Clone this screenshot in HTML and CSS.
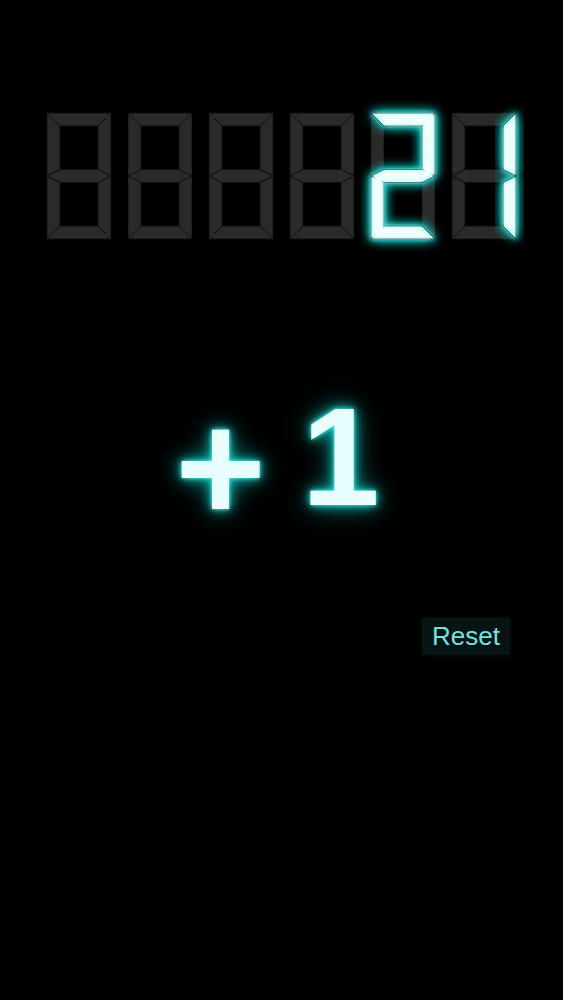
FILE: index.html
```html
<!DOCTYPE html>
<html>
<head>
<meta charset="utf-8">
<link rel="stylesheet" href="styles.css">
</head>
<body>
<svg width="0" height="0" class="defs">
  <defs>
    <filter id="glow" x="-60%" y="-60%" width="220%" height="220%">
      <feGaussianBlur in="SourceAlpha" stdDeviation="6" result="b1"/>
      <feFlood flood-color="#0fc8c0" result="c1"/>
      <feComposite in="c1" in2="b1" operator="in" result="g1"/>
      <feGaussianBlur in="SourceAlpha" stdDeviation="2.2" result="b2"/>
      <feFlood flood-color="#38eee6" result="c2"/>
      <feComposite in="c2" in2="b2" operator="in" result="g2"/>
      <feMorphology in="SourceAlpha" operator="erode" radius="2" result="er"/>
      <feGaussianBlur in="er" stdDeviation="1.5" result="b3"/>
      <feFlood flood-color="#f0fffe" result="c3"/>
      <feComposite in="c3" in2="b3" operator="in" result="g3"/>
      <feMerge>
        <feMergeNode in="g1"/>
        <feMergeNode in="g1"/>
        <feMergeNode in="g2"/>
        <feMergeNode in="SourceGraphic"/>
        <feMergeNode in="g3"/>
      </feMerge>
    </filter>
    <g id="sa"><polygon points="0,0 64,0 51,13 13,13"/></g>
    <g id="sb"><polygon points="64,0 64,63 51,56.5 51,13"/></g>
    <g id="sc"><polygon points="64,63 64,126 51,113 51,69.5"/></g>
    <g id="sd"><polygon points="0,126 64,126 51,113 13,113"/></g>
    <g id="se"><polygon points="0,63 13,69.5 13,113 0,126"/></g>
    <g id="sf"><polygon points="0,0 13,13 13,56.5 0,63"/></g>
    <g id="sg"><polygon points="0,63 13,56.5 51,56.5 64,63 51,69.5 13,69.5"/></g>
  </defs>
</svg>
<main class="screen">
  <div class="display">
    <svg class="digit" viewBox="0 0 64 126"><g class="off"><use href="#sa"/><use href="#sb"/><use href="#sc"/><use href="#sd"/><use href="#se"/><use href="#sf"/><use href="#sg"/></g></svg>
    <svg class="digit" viewBox="0 0 64 126"><g class="off"><use href="#sa"/><use href="#sb"/><use href="#sc"/><use href="#sd"/><use href="#se"/><use href="#sf"/><use href="#sg"/></g></svg>
    <svg class="digit" viewBox="0 0 64 126"><g class="off"><use href="#sa"/><use href="#sb"/><use href="#sc"/><use href="#sd"/><use href="#se"/><use href="#sf"/><use href="#sg"/></g></svg>
    <svg class="digit" viewBox="0 0 64 126"><g class="off"><use href="#sa"/><use href="#sb"/><use href="#sc"/><use href="#sd"/><use href="#se"/><use href="#sf"/><use href="#sg"/></g></svg>
    <svg class="digit" viewBox="0 0 64 126"><g class="off"><use href="#sc"/><use href="#sf"/></g><g class="on" filter="url(#glow)"><use href="#sa"/><use href="#sb"/><use href="#sg"/><use href="#se"/><use href="#sd"/></g></svg>
    <svg class="digit" viewBox="0 0 64 126"><g class="off"><use href="#sa"/><use href="#sd"/><use href="#se"/><use href="#sf"/><use href="#sg"/></g><g class="on" filter="url(#glow)"><use href="#sb"/><use href="#sc"/></g></svg>
  </div>
  <div class="increment"><span class="plus">+</span><span class="one">1</span></div>
  <div class="actions"><button class="reset">Reset</button></div>
</main>
</body>
</html>
```
FILE: styles.css
```css
html, body {
  margin: 0;
  padding: 0;
  background: #000;
  height: 100%;
}
.defs {
  position: absolute;
  width: 0;
  height: 0;
}
.screen {
  width: 563px;
  height: 1000px;
  background: #000;
  display: flex;
  flex-direction: column;
  font-family: "Liberation Sans", Arial, sans-serif;
}
.display {
  display: flex;
  gap: 17px;
  padding: 113px 0 0 47px;
}
.digit {
  width: 64px;
  height: 126px;
  overflow: visible;
  flex: none;
}
.off {
  fill: #2a2a2a;
  stroke: #0c0c0c;
  stroke-width: 0.8;
  stroke-linejoin: miter;
}
.on {
  fill: #b8fbf6;
  stroke: #000;
  stroke-width: 0.8;
}
.increment {
  margin-top: 148px;
  display: flex;
  justify-content: center;
  align-items: flex-end;
  gap: 36px;
  font-weight: bold;
  font-size: 140px;
  line-height: 140px;
  color: #e8fffd;
  text-shadow: 0 0 4px #50f5ee, 0 0 12px #14d4cc, 0 0 26px #0a9a94;
  padding-right: 8px;
}
.plus {
  font-size: 155px;
  line-height: 119px;
}
.actions {
  margin-top: 91px;
  display: flex;
  justify-content: flex-end;
  padding-right: 53px;
}
.reset {
  background: #061414;
  border: none;
  color: #74e2e2;
  font-family: "Liberation Sans", Arial, sans-serif;
  font-size: 26px;
  padding: 6px 10px 7px;
  line-height: 24px;
  box-shadow: 0 0 6px #041010;
}
```
